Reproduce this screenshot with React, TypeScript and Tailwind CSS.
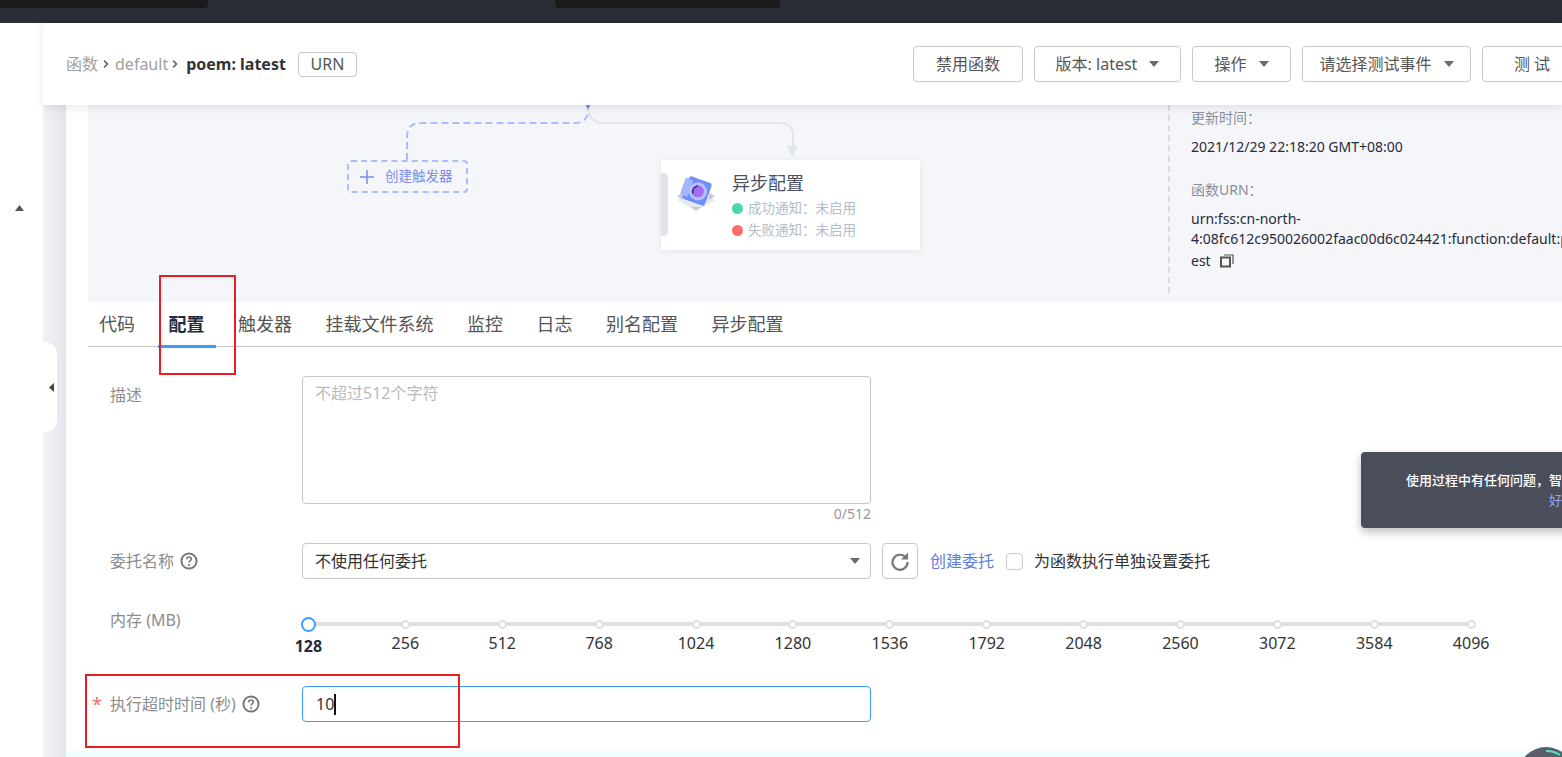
import { ChevronRight } from "lucide-react";

const font = { fontFamily: '"Noto Sans", "Noto Sans CJK SC", sans-serif' };

const tabs = ["代码", "配置", "触发器", "挂载文件系统", "监控", "日志", "别名配置", "异步配置"];
const memory = [128, 256, 512, 768, 1024, 1280, 1536, 1792, 2048, 2560, 3072, 3584, 4096];

const Caret = ({ className = "" }: { className?: string }) => (
  <svg width="10" height="6" viewBox="0 0 10 6" className={className}>
    <path d="M0 0h10L5 6z" fill="#6b6b6b" />
  </svg>
);

const Help = () => (
  <svg width="18" height="18" viewBox="0 0 18 18" className="shrink-0">
    <circle cx="9" cy="9" r="7.6" fill="none" stroke="#777" strokeWidth="2" />
    <path d="M6.7 7.2c0-1.4 1-2.2 2.3-2.2s2.3.8 2.3 2c0 1.900-2.300 1.800-2.300 3.600" fill="none" stroke="#777" strokeWidth="1.700" />
    <circle cx="9" cy="13" r="1.100" fill="#777" />
  </svg>
);

const HeaderButton = ({ width, label, caret }: { width: string; label: string; caret?: boolean }) => (
  <button className={`${width} h-9 shrink-0 flex items-center justify-center gap-3 rounded-sm border border-[#c8c8c8] bg-white text-base text-[#555]`}>
    <span>{label}</span>
    {caret && <Caret />}
  </button>
);

const AsyncIcon = () => (
  <svg width="44" height="40" viewBox="0 0 44 40">
    <path d="M22 14 41 25 22 36 3 25z" fill="#e6e9ee" />
    <path d="M3 21l6-3v7zM41 21l-6-3v7zM17 32l10 0-5 4z" fill="#c3c9d2" />
    <g transform="rotate(20 23 16)">
      <rect x="11" y="4" width="24" height="24" rx="3" fill="#6f8dfb" />
      <rect x="8" y="7" width="8" height="18" rx="2" fill="#a3b6ff" />
      <circle cx="24" cy="16" r="9" fill="#b4c3ff" />
      <circle cx="24" cy="16" r="6" fill="#a56cf2" />
      <path d="M20 20a6 6 0 0 1 2-9" fill="none" stroke="#3c2a80" strokeWidth="1.500" />
    </g>
  </svg>
);

const DiagramLines = () => (
  <svg width="500" height="60" viewBox="0 0 500 60" className="absolute left-[300px] top-0">
    {/* origin is (388,105) on the page */}
    <path d="M19 55V32q0-14 14-14H186q14 0 14-13V0" fill="none" stroke="#adbcff" strokeWidth="2" strokeDasharray="7 4" />
    <path d="M200 5q2 12 14 13H392q13 0 13 13v12" fill="none" stroke="#e1e6ea" strokeWidth="2" />
    <path d="M399 41h11l-5.500 12z" fill="#e1e6ea" />
    <circle cx="200" cy="1" r="2" fill="#7c8cf0" />
  </svg>
);

const DiagramPanel = () => (
  <div className="flex h-[197px] overflow-hidden bg-[#f5f6fa]">
    <div className="relative w-[1080px] shrink-0">
      <DiagramLines />
      <div className="absolute left-[259px] top-[55px] flex h-[33px] w-[121px] items-center gap-[11px] rounded border-2 border-dashed border-[#adbcff] pl-[11px] text-[13.5px] text-[#7c8cf0]">
        <svg width="14" height="14" viewBox="0 0 14 14" className="shrink-0">
          <path d="M7 0v14M0 7h14" stroke="#7c8cf0" strokeWidth="1.500" />
        </svg>
        <span className="whitespace-nowrap">创建触发器</span>
      </div>
      <div className="absolute left-[573px] top-[55px] flex h-[90px] w-[259px] bg-white shadow-[0_1px_6px_rgba(0,0,0,0.08)]">
        <div className="absolute left-0 top-[13px] h-[63px] w-[7px] rounded-r-sm bg-[#e1e5ea]" />
        <div className="ml-[13px] mt-[15px] w-[44px] shrink-0">
          <AsyncIcon />
        </div>
        <div className="ml-[14px] mt-[11px] flex flex-col">
          <span className="text-[18px] leading-[25px] text-[#4b5160]">异步配置</span>
          <div className="mt-[1px] flex h-[22px] items-center gap-[5px] text-[13.5px] text-[#b5bcc5]">
            <span className="h-[11px] w-[11px] rounded-full bg-[#50d4ab]" />
            成功通知：未启用
          </div>
          <div className="flex h-[22px] items-center gap-[5px] text-[13.5px] text-[#b5bcc5]">
            <span className="h-[11px] w-[11px] rounded-full bg-[#fa6e6e]" />
            失败通知：未启用
          </div>
        </div>
      </div>
    </div>
    <div className="h-[188px] w-[500px] shrink-0 border-l-2 border-dashed border-[#d8dbe0] pl-[21px] text-sm text-[#252b3a]">
      <div className="mt-[3px] leading-5 text-[#8a8e99]">更新时间：</div>
      <div className="mt-[9px] leading-5">2021/12/29 22:18:20 GMT+08:00</div>
      <div className="mt-[23px] leading-5 text-[#8a8e99]">函数URN：</div>
      <div className="mt-[9px] leading-5">urn:fss:cn-north-</div>
      <div className="leading-5 whitespace-nowrap">4:08fc612c950026002faac00d6c024421:function:default:poem:lat</div>
      <div className="mt-[2px] flex items-center gap-[9px] leading-5">
        est
        <svg width="14" height="14" viewBox="0 0 14 14">
          <path d="M4 1h9v9" fill="none" stroke="#555" strokeWidth="1.200" />
          <rect x="1" y="3.500" width="9" height="9" fill="none" stroke="#555" strokeWidth="2" />
        </svg>
      </div>
    </div>
  </div>
);

const Tabs = () => (
  <div className="flex h-[45px] items-center border-b border-[#c8c8c8] pl-[11px]">
    {tabs.map((tab) => (
      <div key={tab} className={`relative mr-[33.500px] flex h-full items-center text-[18px] whitespace-nowrap ${tab === "配置" ? "font-bold text-[#252b3a]" : "text-[#555]"}`}>
        {tab}
        {tab === "配置" && <span className="absolute -left-[11px] -right-[11px] bottom-[-2px] h-[3px] bg-[#3c9cff]" />}
      </div>
    ))}
  </div>
);

const Slider = () => (
  <div className="relative -ml-[42px] flex">
    <div className="absolute left-[48px] top-[10px] h-[4px] w-[1163px] bg-[#dfdfdf]" />
    {memory.map((m, i) => (
      <div key={m} className="relative flex w-[96.900px] shrink-0 flex-col items-center">
        {i === 0 ? (
          <span className="mt-[5px] h-[15px] w-[15px] rounded-full border-2 border-[#3c9cff] bg-white" />
        ) : (
          <span className="mt-[8px] h-[9px] w-[9px] rounded-full border-2 border-[#dfdfdf] bg-white" />
        )}
        <span className={`mt-[2px] text-base leading-6 ${i === 0 ? "font-bold text-[#252b3a]" : "text-[#333]"}`}>{m}</span>
      </div>
    ))}
  </div>
);

const ConfigForm = () => (
  <div className="pl-[22px] pt-[29px] text-base">
    <div className="flex">
      <div className="w-[192px] shrink-0 pt-[7px] leading-6 text-[#8c8c8c]">描述</div>
      <div className="w-[569px]">
        <div className="h-[128px] rounded-sm border border-[#c8c8c8] px-3 py-1 leading-6 text-[#bbb]">不超过512个字符</div>
        <div className="h-[19px] pt-[1px] text-right text-sm leading-[18px] text-[#999]">0/512</div>
      </div>
    </div>
    <div className="mt-[20px] flex items-center">
      <div className="flex w-[192px] shrink-0 items-center gap-[6px] text-[#8c8c8c]">
        委托名称 <Help />
      </div>
      <div className="flex h-9 w-[569px] items-center justify-between rounded-sm border border-[#c8c8c8] pl-3 pr-[10px] text-[#333]">
        不使用任何委托
        <Caret />
      </div>
      <div className="ml-[11px] flex h-9 w-9 items-center justify-center rounded-sm border border-[#c8c8c8]">
        <svg width="20" height="20" viewBox="0 0 20 20">
          <path d="M15.800 6.500A7.500 7.500 0 1 0 17.500 11" fill="none" stroke="#777" strokeWidth="2.200" />
          <path d="M18 1.500v7h-7z" fill="#777" />
        </svg>
      </div>
      <span className="ml-3 text-[#5e7ce0]">创建委托</span>
      <span className="ml-3 h-[17px] w-[17px] rounded-sm border border-[#c8c8c8]" />
      <span className="ml-[11px] text-[#333]">为函数执行单独设置委托</span>
    </div>
    <div className="mt-[33px] flex h-[50px]">
      <div className="w-[192px] shrink-0 leading-4 text-[#8c8c8c]">内存 (MB)</div>
      <Slider />
    </div>
    <div className="mt-[24px] flex items-center">
      <div className="relative flex w-[192px] shrink-0 items-center gap-[6px] text-[#8c8c8c]">
        <span className="absolute -left-[18px] top-[2px] text-lg leading-5 text-[#f66]">*</span>
        执行超时时间 (秒) <Help />
      </div>
      <div className="flex h-9 w-[569px] items-center rounded-sm border border-[#3c9cff] pl-[13px] text-[#333]">
        10
        <span className="h-[21px] w-[1.500px] bg-[#111]" />
      </div>
    </div>
  </div>
);

export default function App() {
  return (
    <div style={font} className="relative flex h-[757px] w-[1562px] flex-col overflow-hidden bg-white">
      {/* top bar */}
      <div className="flex h-[23px] shrink-0 bg-[#2a2d36]">
        <div className="h-2 w-[208px] rounded-br-sm bg-[#1a1a1a]" />
        <div className="ml-[347px] h-2 w-[225px] rounded-b-sm bg-[#1a1a1a]" />
      </div>

      <div className="flex min-h-0 flex-1">
        <div className="flex w-[43px] shrink-0 justify-center pt-[182px]">
          <svg width="9" height="6" viewBox="0 0 9 6" className="-ml-[4px]">
            <path d="M4.500 0 9 6H0z" fill="#555" />
          </svg>
        </div>

        <div className="relative flex min-w-0 flex-1 flex-col">
          {/* function header */}
          <div className="relative z-10 flex h-[82px] shrink-0 items-center bg-white shadow-[0_2px_10px_rgba(0,0,0,0.1)]">
            <div className="flex w-[870px] shrink-0 items-center pl-[23px] text-base text-[#a0a0a0]">
              <span>函数</span>
              <ChevronRight size={12} strokeWidth={3} className="mx-[2px] text-[#555]" />
              <span className="ml-[1px]">default</span>
              <ChevronRight size={12} strokeWidth={3} className="mx-[1px] text-[#555]" />
              <span className="ml-[4px] font-bold text-[#333]">poem: latest</span>
              <span className="ml-3 flex h-[25px] w-[59px] items-center justify-center rounded-sm border border-[#c8c8c8] text-[#555]">URN</span>
            </div>
            <div className="flex shrink-0 gap-[11px]">
              <HeaderButton width="w-[110px]" label="禁用函数" />
              <HeaderButton width="w-[147px]" label="版本: latest" caret />
              <HeaderButton width="w-[99px]" label="操作" caret />
              <HeaderButton width="w-[169px]" label="请选择测试事件" caret />
              <HeaderButton width="w-[100px]" label="测 试" />
            </div>
          </div>

          <div className="flex min-h-0 flex-1">
            <div className="w-[23px] shrink-0 bg-linear-to-r from-[#f1f2f6] to-[#e5e6ed]" />
            <div className="flex min-w-0 flex-1 flex-col">
              <div className="min-h-0 flex-1 pl-[22px]">
                <DiagramPanel />
                <Tabs />
                <ConfigForm />
              </div>
              <div className="h-[6px] shrink-0 bg-[#effffd]" />
            </div>
          </div>

          {/* collapse handle */}
          <div className="absolute left-0 top-[319px] flex h-[90px] w-[14px] items-center justify-end rounded-r-xl bg-white pr-[3px]">
            <svg width="5" height="9" viewBox="0 0 5 9">
              <path d="M5 0v9L0 4.500z" fill="#444" />
            </svg>
          </div>
        </div>
      </div>

      {/* help tooltip */}
      <div className="absolute left-[1361px] top-[452px] z-20 flex h-[76px] w-[402px] flex-col items-center justify-center rounded bg-[#4a4e5b] text-[13px] leading-5 shadow-[0_4px_10px_rgba(0,0,0,0.25)]">
        <span className="font-medium whitespace-nowrap text-white">使用过程中有任何问题，智能客服小助手随时为您解答</span>
        <span className="text-[#8ea4f5]">好的</span>
      </div>

      {/* chat bubble */}
      <div className="absolute left-[1518px] top-[747px] z-20 h-[56px] w-[56px] rounded-full bg-[#5b5f6c]">
        <svg width="56" height="56" viewBox="0 0 56 56">
          <path d="M28 4a24 24 0 0 1 14 4" fill="none" stroke="#4fe0c8" strokeWidth="2" />
        </svg>
      </div>

      {/* red annotation boxes */}
      <div className="absolute left-[159px] top-[275px] z-30 h-[100px] w-[77px] border-2 border-[#ed1c24]" />
      <div className="absolute left-[85px] top-[674px] z-30 h-[74px] w-[375px] border-2 border-[#ed1c24]" />
    </div>
  );
}
